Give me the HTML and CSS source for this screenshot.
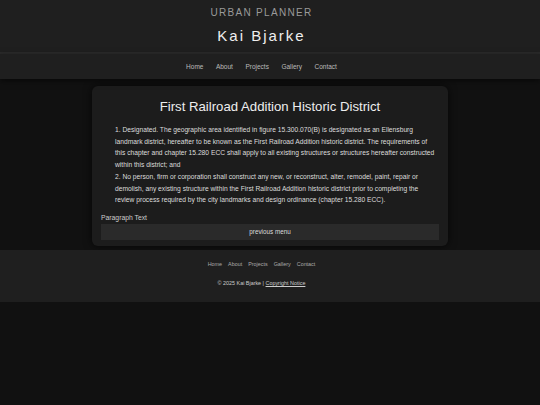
FILE: index.html
```html
<!DOCTYPE html>
<html lang="en">
<head>
<meta charset="utf-8">
<title>Kai Bjarke - Urban Planner</title>
<link rel="stylesheet" href="styles.css">
</head>
<body>
<header class="site-header">
  <div class="role">URBAN PLANNER</div>
  <div class="name">Kai Bjarke</div>
</header>
<nav class="main-nav">
  <a href="#">Home</a>
  <a href="#">About</a>
  <a href="#">Projects</a>
  <a href="#">Gallery</a>
  <a href="#">Contact</a>
</nav>
<main class="content">
  <section class="card">
    <h1 class="card-title">First Railroad Addition Historic District</h1>
    <div class="card-text">
      1. Designated. The geographic area identified in figure 15.300.070(B) is designated as an Ellensburg landmark district, hereafter to be known as the First Railroad Addition historic district. The requirements of this chapter and chapter 15.280 ECC shall apply to all existing structures or structures hereafter constructed within this district; and<br>
      2. No person, firm or corporation shall construct any new, or reconstruct, alter, remodel, paint, repair or demolish, any existing structure within the First Railroad Addition historic district prior to completing the review process required by the city landmarks and design ordinance (chapter 15.280 ECC).
    </div>
    <p class="para-label">Paragraph Text</p>
    <a class="menu-button" href="#">previous menu</a>
  </section>
</main>
<footer class="site-footer">
  <nav class="footer-nav">
    <a href="#">Home</a>
    <a href="#">About</a>
    <a href="#">Projects</a>
    <a href="#">Gallery</a>
    <a href="#">Contact</a>
  </nav>
  <p class="copyright">© 2025 Kai Bjarke | <a href="#">Copyright Notice</a></p>
</footer>
</body>
</html>
```
FILE: styles.css
```css
html, body {
  margin: 0;
  padding: 0;
  background: #111111;
  font-family: "Liberation Sans", Arial, sans-serif;
  color: #dddddd;
}

a {
  color: inherit;
  text-decoration: none;
}

.site-header {
  background: #1f1f1f;
  height: 54px;
  box-sizing: border-box;
  padding: 6px 17px 0 0;
  text-align: center;
  border-bottom: 2px solid #2a2a2a;
}

.role {
  font-size: 10px;
  letter-spacing: 1.3px;
  color: #9a9a9a;
  line-height: 14px;
}

.name {
  margin-top: 7px;
  font-size: 15px;
  letter-spacing: 2px;
  color: #eeeeee;
  line-height: 17px;
}

.main-nav {
  background: #1f1f1f;
  height: 25px;
  box-sizing: border-box;
  padding-right: 17px;
  display: flex;
  justify-content: center;
  align-items: center;
  gap: 12.5px;
  font-size: 6.5px;
  color: #bbbbbb;
  box-shadow: 0 2px 6px rgba(0, 0, 0, 0.55);
  position: relative;
}

.content {
  padding-top: 7px;
}

.card {
  width: 356px;
  margin: 0 auto;
  box-sizing: border-box;
  padding: 12px 9px 6px;
  background: #1c1c1c;
  border-radius: 6px;
  box-shadow: 0 0 8px rgba(0, 0, 0, 0.7);
}

.card-title {
  margin: 0;
  font-size: 13.2px;
  font-weight: normal;
  text-align: center;
  color: #eeeeee;
  line-height: 18px;
}

.card-text {
  margin: 8px 0 0 14px;
  font-size: 6.7px;
  line-height: 11.7px;
  color: #dddddd;
}

.para-label {
  margin: 7px 0 0;
  font-size: 6.8px;
  line-height: 10px;
  color: #cccccc;
}

.menu-button {
  display: block;
  margin-top: 1px;
  height: 16px;
  line-height: 16px;
  background: #2a2a2a;
  text-align: center;
  font-size: 6.3px;
  color: #dddddd;
}

.site-footer {
  margin-top: 4px;
  background: #1f1f1f;
  height: 52px;
  box-sizing: border-box;
  padding: 10px 17px 0 0;
  text-align: center;
}

.footer-nav {
  display: flex;
  justify-content: center;
  gap: 6px;
  font-size: 5.4px;
  line-height: 8px;
  color: #aaaaaa;
}

.copyright {
  margin: 11px 0 0;
  font-size: 5.4px;
  line-height: 8px;
  color: #cccccc;
}

.copyright a {
  text-decoration: underline;
}
```
